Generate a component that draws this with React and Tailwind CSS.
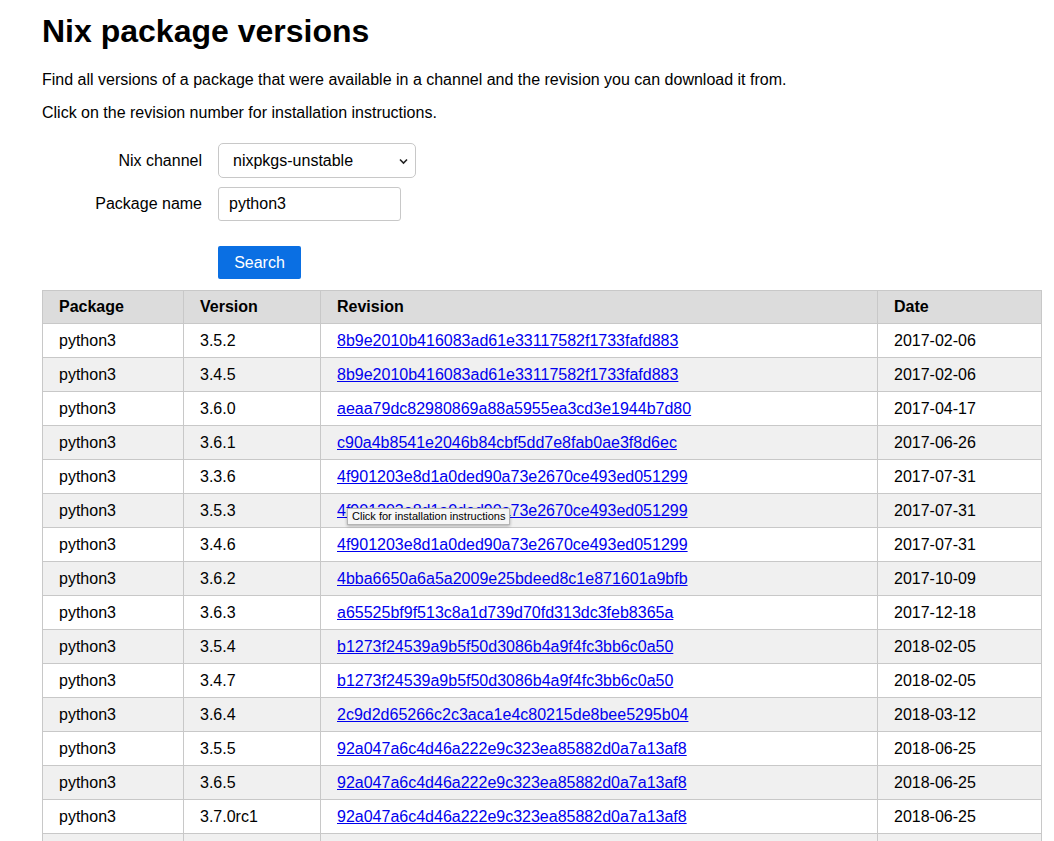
import React from "react";

const rows = [
  ["python3", "3.5.2", "8b9e2010b416083ad61e33117582f1733fafd883", "2017-02-06"],
  ["python3", "3.4.5", "8b9e2010b416083ad61e33117582f1733fafd883", "2017-02-06"],
  ["python3", "3.6.0", "aeaa79dc82980869a88a5955ea3cd3e1944b7d80", "2017-04-17"],
  ["python3", "3.6.1", "c90a4b8541e2046b84cbf5dd7e8fab0ae3f8d6ec", "2017-06-26"],
  ["python3", "3.3.6", "4f901203e8d1a0ded90a73e2670ce493ed051299", "2017-07-31"],
  ["python3", "3.5.3", "4f901203e8d1a0ded90a73e2670ce493ed051299", "2017-07-31"],
  ["python3", "3.4.6", "4f901203e8d1a0ded90a73e2670ce493ed051299", "2017-07-31"],
  ["python3", "3.6.2", "4bba6650a6a5a2009e25bdeed8c1e871601a9bfb", "2017-10-09"],
  ["python3", "3.6.3", "a65525bf9f513c8a1d739d70fd313dc3feb8365a", "2017-12-18"],
  ["python3", "3.5.4", "b1273f24539a9b5f50d3086b4a9f4fc3bb6c0a50", "2018-02-05"],
  ["python3", "3.4.7", "b1273f24539a9b5f50d3086b4a9f4fc3bb6c0a50", "2018-02-05"],
  ["python3", "3.6.4", "2c9d2d65266c2c3aca1e4c80215de8bee5295b04", "2018-03-12"],
  ["python3", "3.5.5", "92a047a6c4d46a222e9c323ea85882d0a7a13af8", "2018-06-25"],
  ["python3", "3.6.5", "92a047a6c4d46a222e9c323ea85882d0a7a13af8", "2018-06-25"],
  ["python3", "3.7.0rc1", "92a047a6c4d46a222e9c323ea85882d0a7a13af8", "2018-06-25"],
  ["python3", "3.7.0", "2a4a8e0b1e4ca1fd4d2e7cb2d7f6b7ef0c0f4a9d", "2018-07-05"],
];

export default function App() {
  return (
    <div
      className="relative min-h-[841px] bg-white text-black pl-[42px] pr-[12px] pt-[13px]"
      style={{ fontFamily: '"Liberation Sans", Arial, Helvetica, sans-serif' }}
    >
      <h1 className="text-[32px] leading-[36px] font-bold m-0">Nix package versions</h1>
      <p className="text-[16px] leading-[18px] mt-[22px]">
        Find all versions of a package that were available in a channel and the revision you can download it from.
      </p>
      <p className="text-[16px] leading-[18px] mt-[15px]">
        Click on the revision number for installation instructions.
      </p>

      <div className="mt-[21px] grid grid-cols-[160px_auto] gap-x-[16px] items-center">
        <label className="text-right text-[16px] leading-[18px]">Nix channel</label>
        <div className="relative w-[198px] h-[35px] border border-[#c8c8c8] rounded-[5px] bg-white flex items-center pl-[14px]">
          <span className="text-[16px] leading-[18px]">nixpkgs-unstable</span>
          <svg
            className="absolute right-[7px] top-[14px]"
            width="9"
            height="7"
            viewBox="0 0 9 7"
            fill="none"
            stroke="#222"
            strokeWidth="1.6"
          >
            <path d="M1 1.5 L4.5 5 L8 1.5" />
          </svg>
        </div>
        <label className="text-right text-[16px] leading-[18px] mt-[9px]">Package name</label>
        <div className="mt-[9px] w-[183px] h-[34px] border border-[#c8c8c8] rounded-[3px] bg-white flex items-center pl-[10px]">
          <span className="text-[16px] leading-[18px]">python3</span>
        </div>
        <div />
        <button className="mt-[25px] w-[83px] h-[33px] bg-[#0a6fe3] text-white text-[16px] rounded-[2px] flex items-center justify-center">
          Search
        </button>
      </div>

      <table className="mt-[11px] w-[999px] border-collapse table-fixed text-[16px]">
        <colgroup>
          <col className="w-[141px]" />
          <col className="w-[137px]" />
          <col className="w-[557px]" />
          <col className="w-[164px]" />
        </colgroup>
        <thead>
          <tr className="bg-[#dcdcdc] h-[33px]">
            {["Package", "Version", "Revision", "Date"].map((h) => (
              <th key={h} className="border border-[#c8c8c8] text-left font-bold pl-[16px] py-0 leading-[18px]">
                {h}
              </th>
            ))}
          </tr>
        </thead>
        <tbody>
          {rows.map((r, i) => (
            <tr key={i} className={(i % 2 === 1 ? "bg-[#f0f0f0]" : "bg-white") + " h-[34px]"}>
              <td className="border border-[#c8c8c8] pl-[16px] py-0 leading-[18px]">{r[0]}</td>
              <td className="border border-[#c8c8c8] pl-[16px] py-0 leading-[18px]">{r[1]}</td>
              <td className="border border-[#c8c8c8] pl-[16px] py-0 leading-[18px]">
                <a href="#" className="text-[#0000ee] underline">{r[2]}</a>
              </td>
              <td className="border border-[#c8c8c8] pl-[16px] py-0 leading-[18px]">{r[3]}</td>
            </tr>
          ))}
        </tbody>
      </table>

      <div className="absolute left-[347px] top-[508px] h-[17px] px-[4px] bg-[#f6f6f6] border border-[#b5b5b5] shadow-[0_1px_3px_rgba(0,0,0,0.3)] text-[11px] leading-[15px] text-black whitespace-nowrap">
        Click for installation instructions
      </div>
    </div>
  );
}
